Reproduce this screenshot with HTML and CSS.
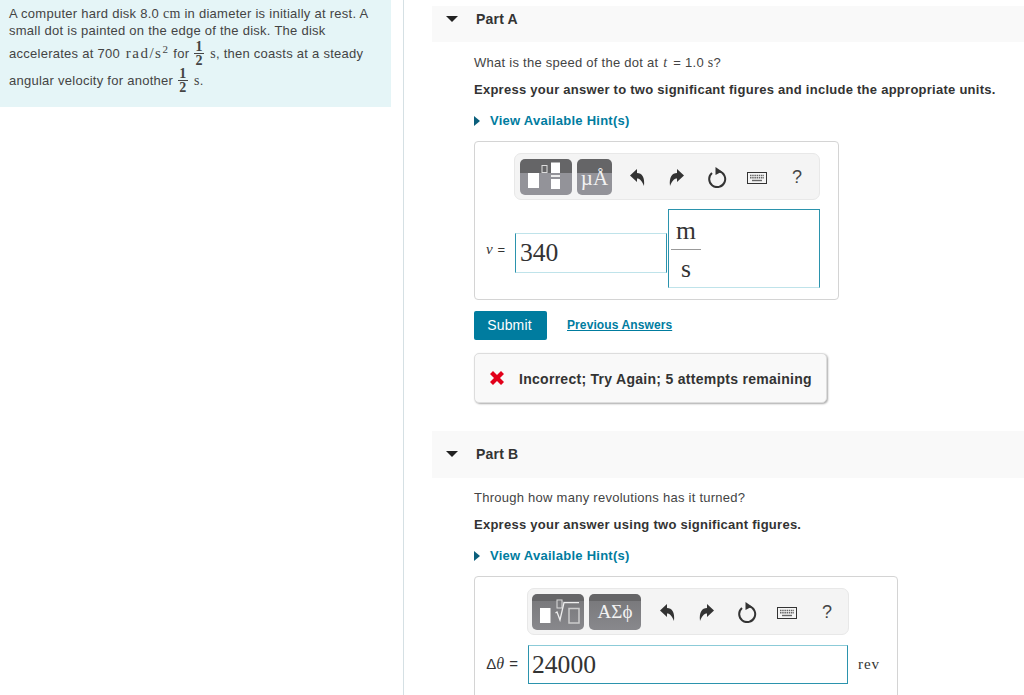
FILE: index.html
```html
<!DOCTYPE html>
<html lang="en">
<head>
    <meta charset="UTF-8">
    <title>Part A</title>
    <link rel="stylesheet" href="styles.css">
</head>
<body>
    <div class="page">
        <aside class="problem-col">
            <div class="problem">
                <p class="line">A computer hard disk 8.0 <span class="math">cm</span> in diameter is initially at rest. A</p>
                <p class="line">small dot is painted on the edge of the disk. The disk</p>
                <p class="line line-frac">accelerates at 700 <span class="math math-wide">rad/s<sup>2</sup></span> for <span class="frac"><span>1</span><span class="den">2</span></span> <span class="math">s</span>, then coasts at a steady</p>
                <p class="line line-frac">angular velocity for another <span class="frac"><span>1</span><span class="den">2</span></span> <span class="math">s</span>.</p>
            </div>
        </aside>

        <main class="parts-col">
            <section class="part part-a">
                <h2 class="part-head"><span class="caret-down"></span>Part A</h2>
                <div class="part-body">
                    <p class="question">What is the speed of the dot at <i class="math math-t">t</i> = 1.0 <span class="math">s</span>?</p>
                    <p class="express">Express your answer to two significant figures and include the appropriate units.</p>
                    <a class="hint"><span class="caret-right"></span>View Available Hint(s)</a>

                    <div class="answer-box box-a">
                        <div class="toolbar toolbar-a">
                            <span class="tool-btn btn-templates">
                                <svg width="52" height="36" viewBox="0 0 52 36">
                                    <rect x="8" y="14" width="11" height="15" fill="#fff"/>
                                    <rect x="22" y="6.500" width="5" height="7" fill="none" stroke="#ddd"/>
                                    <rect x="31" y="3.500" width="9" height="10.500" fill="#fff"/>
                                    <rect x="31" y="16" width="9" height="2" fill="#eee"/>
                                    <rect x="31" y="20" width="9" height="10" fill="#fff"/>
                                </svg>
                            </span>
                            <span class="tool-btn btn-symbols btn-unit">µÅ</span>
                            <span class="tool-icon"><svg width="22" height="22" viewBox="0 0 22 22"><path d="M4 9.500 L11 3 V7 C16 7 19 11 18 20 C16 15 14 12.500 11 12.500 V16 Z" fill="#333"/></svg></span>
                            <span class="tool-icon"><svg width="22" height="22" viewBox="0 0 22 22"><path d="M18 9.500 L11 3 V7 C6 7 3 11 4 20 C6 15 8 12.500 11 12.500 V16 Z" fill="#333"/></svg></span>
                            <span class="tool-icon"><svg width="22" height="22" viewBox="0 0 22 22"><path d="M6 7 A8 8 0 1 0 13 5.300" fill="none" stroke="#333" stroke-width="2"/><path d="M9.500 1 L16 5.500 L9.500 9 Z" fill="#333"/></svg></span>
                            <span class="tool-icon tool-keys"><svg width="20" height="12" viewBox="0 0 20 12"><rect x="0.500" y="0.500" width="19" height="11" fill="#f4f4f4" stroke="#333"/><path d="M3 3.500 H17 M3 5.800 H17" stroke="#666" stroke-width="1.400" stroke-dasharray="1.500 .7"/><path d="M5 8.500 H15" stroke="#666" stroke-width="1.400"/></svg></span>
                            <span class="tool-icon tool-help">?</span>
                        </div>
                        <div class="answer-row">
                            <span class="var-label"><i>v</i> =</span>
                            <span class="input input-value">340</span>
                            <span class="input input-unit">
                                <span class="unit-frac"><span class="unit-num">m</span><span class="unit-den">s</span></span>
                            </span>
                        </div>
                    </div>

                    <div class="actions">
                        <button class="submit">Submit</button>
                        <a class="prev-link">Previous Answers</a>
                    </div>

                    <div class="feedback">
                        <svg width="14" height="14" viewBox="0 0 14 14"><path d="M0 3 L3 0 L7 4 L11 0 L14 3 L10 7 L14 11 L11 14 L7 10 L3 14 L0 11 L4 7 Z" fill="#e2001a"/></svg>
                        <span>Incorrect; Try Again; 5 attempts remaining</span>
                    </div>
                </div>
            </section>

            <section class="part part-b">
                <h2 class="part-head head-b"><span class="caret-down"></span>Part B</h2>
                <div class="part-body">
                    <p class="question">Through how many revolutions has it turned?</p>
                    <p class="express">Express your answer using two significant figures.</p>
                    <a class="hint"><span class="caret-right"></span>View Available Hint(s)</a>

                    <div class="answer-box box-b">
                        <div class="toolbar toolbar-b">
                            <span class="tool-btn btn-templates">
                                <svg width="52" height="36" viewBox="0 0 52 36">
                                    <rect x="8" y="14" width="10.500" height="15" fill="#fff"/>
                                    <rect x="25" y="6" width="5" height="8" fill="none" stroke="#ddd"/>
                                    <path d="M23.500 19 L25 18 L28 26 L32 8.700 H47" fill="none" stroke="#eee" stroke-width="1.300"/>
                                    <rect x="37" y="14.500" width="10" height="14.500" fill="none" stroke="#ccc" stroke-width="1.500"/>
                                </svg>
                            </span>
                            <span class="tool-btn btn-symbols btn-greek">ΑΣϕ</span>
                            <span class="tool-icon"><svg width="22" height="22" viewBox="0 0 22 22"><path d="M4 9.500 L11 3 V7 C16 7 19 11 18 20 C16 15 14 12.500 11 12.500 V16 Z" fill="#333"/></svg></span>
                            <span class="tool-icon"><svg width="22" height="22" viewBox="0 0 22 22"><path d="M18 9.500 L11 3 V7 C6 7 3 11 4 20 C6 15 8 12.500 11 12.500 V16 Z" fill="#333"/></svg></span>
                            <span class="tool-icon"><svg width="22" height="22" viewBox="0 0 22 22"><path d="M6 7 A8 8 0 1 0 13 5.300" fill="none" stroke="#333" stroke-width="2"/><path d="M9.500 1 L16 5.500 L9.500 9 Z" fill="#333"/></svg></span>
                            <span class="tool-icon tool-keys"><svg width="20" height="12" viewBox="0 0 20 12"><rect x="0.500" y="0.500" width="19" height="11" fill="#f4f4f4" stroke="#333"/><path d="M3 3.500 H17 M3 5.800 H17" stroke="#666" stroke-width="1.400" stroke-dasharray="1.500 .7"/><path d="M5 8.500 H15" stroke="#666" stroke-width="1.400"/></svg></span>
                            <span class="tool-icon tool-help">?</span>
                        </div>
                        <div class="answer-row row-b">
                            <span class="var-label label-b">Δ<i>θ</i> =</span>
                            <span class="input input-long">24000</span>
                            <span class="unit-text">rev</span>
                        </div>
                    </div>
                </div>
            </section>
        </main>
    </div>
</body>
</html>
```

FILE: styles.css
```css
html, body {
    margin: 0;
    padding: 0;
    height: 100%;
    background: #fff;
    overflow: hidden;
}
body {
    font-family: "Liberation Sans", Arial, sans-serif;
    font-size: 13px;
    letter-spacing: 0.26px;
    color: #333;
}
p {
    margin: 0;
}
.page {
    display: flex;
    height: 695px;
}
.math {
    font-family: "Liberation Serif", serif;
    font-size: 14px;
}
.math-wide {
    font-size: 15px;
    letter-spacing: 1.5px;
    margin-left: 2px;
}
.math-t {
    margin: 0 2px 0 1px;
}
sup {
    font-size: 11px;
    line-height: 0;
    vertical-align: 5px;
}

/* left column */
.problem-col {
    width: 404px;
    flex: none;
    box-sizing: border-box;
    border-right: 1px solid #d5e0e4;
}
.problem {
    width: 391px;
    height: 107px;
    box-sizing: border-box;
    padding: 5px 9px 0;
    background: #e5f5f7;
    color: #444;
}
.line {
    line-height: 17px;
}
.line-frac {
    display: flex;
    align-items: center;
    height: 27px;
    padding-top: 1px;
    box-sizing: content-box;
    margin-bottom: -1px;
    white-space: pre;
}
.frac {
    display: inline-flex;
    flex-direction: column;
    align-items: center;
    width: 10px;
    margin: 0 6px 0 1px;
    font-family: "Liberation Serif", serif;
    font-size: 14px;
    font-weight: bold;
    line-height: 13px;
}
.den {
    border-top: 1px solid #444;
    width: 100%;
    text-align: center;
}

/* right column */
.parts-col {
    flex: 1;
    padding: 6px 0 0 28px;
    min-width: 0;
}
.part-head {
    display: flex;
    align-items: center;
    height: 36px;
    margin: 0;
    padding: 0 0 10px 14px;
    box-sizing: border-box;
    background: #f9f9f9;
    font-size: 14px;
    font-weight: bold;
    letter-spacing: 0.2px;
    color: #333;
}
.head-b {
    height: 47px;
    padding-bottom: 2px;
    margin-bottom: 11px;
}
.caret-down {
    width: 0;
    height: 0;
    margin-right: 18px;
    border-left: 6px solid transparent;
    border-right: 6px solid transparent;
    border-top: 6px solid #222;
}
.part-body {
    padding-left: 42px;
}
.question {
    margin-top: 12px;
    line-height: 17px;
    color: #444;
}
.part-b .question {
    margin-top: 0;
}
.express {
    margin-top: 10px;
    line-height: 17px;
    font-weight: bold;
    color: #333;
}
.hint {
    display: flex;
    align-items: center;
    margin-top: 14px;
    height: 17px;
    font-weight: bold;
    color: #007c9f;
}
.caret-right {
    width: 0;
    height: 0;
    margin-right: 10px;
    border-top: 5px solid transparent;
    border-bottom: 5px solid transparent;
    border-left: 6px solid #0b5f7c;
}

/* answer box and toolbar */
.answer-box {
    margin-top: 12px;
    border: 1px solid #d4d4d4;
    border-radius: 4px;
    box-sizing: border-box;
}
.box-a {
    width: 365px;
    height: 159px;
    padding-top: 11px;
}
.box-b {
    width: 424px;
    height: 130px;
    padding-top: 11px;
}
.toolbar {
    display: flex;
    align-items: center;
    height: 47px;
    box-sizing: border-box;
    background: #f4f4f4;
    border: 1px solid #e8e8e8;
    border-radius: 7px;
    padding-left: 5px;
}
.toolbar-a {
    width: 306px;
    margin-left: 39px;
}
.toolbar-b {
    width: 322px;
    margin-left: 52px;
    padding-left: 4px;
}
.tool-btn {
    display: block;
    height: 36px;
    box-sizing: border-box;
    border-radius: 5px;
    background: linear-gradient(#656567 0 40%, #939399 40% 100%);
    color: #f2f2f2;
    font-family: "Liberation Serif", serif;
    letter-spacing: 0;
    text-align: center;
}
.btn-templates {
    width: 52px;
    margin-right: 5px;
}
.btn-symbols {
    margin-right: 5px;
}
.btn-unit {
    width: 35px;
    font-size: 21px;
    line-height: 39px;
}
.btn-greek {
    width: 52px;
    margin-right: 6px;
    font-size: 19px;
    line-height: 36px;
    background: linear-gradient(#656567 0 20%, #7a7a7d 20%, #88888c 100%);
}
.toolbar-b .btn-templates {
    background: linear-gradient(#656567 0 20%, #7a7a7d 20%, #88888c 100%);
}
.tool-icon {
    display: flex;
    align-items: center;
    justify-content: center;
    width: 40px;
    height: 36px;
}
.tool-keys {
    padding-top: 2px;
    box-sizing: border-box;
}
.tool-help {
    padding-top: 1px;
    box-sizing: border-box;
    font-size: 18px;
    letter-spacing: 0;
    color: #444;
}
.answer-row {
    display: flex;
    align-items: center;
    height: 79px;
    margin-top: 9px;
}
.var-label {
    width: 40px;
    box-sizing: border-box;
    padding-right: 10px;
    margin-top: 1px;
    text-align: right;
    font-size: 13px;
    letter-spacing: 0;
    white-space: nowrap;
}
.var-label i {
    font-family: "Liberation Serif", serif;
    font-size: 15px;
    margin-right: 1px;
}
.input {
    display: block;
    box-sizing: border-box;
    font-family: "Liberation Serif", serif;
    font-size: 25.600px;
    letter-spacing: 0;
    color: #333;
    background: #fff;
    border: 1px solid #bfe3ea;
    border-left-color: #2b93ad;
    border-right-color: #2b93ad;
}
.input-value {
    width: 152px;
    height: 40px;
    line-height: 37px;
    padding-left: 4px;
    margin-top: 9px;
    margin-right: 1px;
}
.input-unit {
    width: 152px;
    height: 79px;
    padding-left: 2px;
    border-top-color: #2b93ad;
}
.unit-frac {
    display: inline-flex;
    flex-direction: column;
    width: 30px;
    text-align: center;
}
.unit-num {
    height: 39px;
    line-height: 41px;
    border-bottom: 1px solid #999;
}
.unit-den {
    line-height: 38px;
}
.row-b {
    height: 40px;
    margin-top: 9px;
}
.label-b {
    width: 53px;
    font-size: 15px;
    margin-top: 0;
}
.label-b i {
    font-size: 16px;
}
.input-long {
    width: 320px;
    height: 39px;
    line-height: 37px;
    padding-left: 3px;
    border-color: #2b93ad;
    border-top-color: #8ccbd8;
}
.unit-text {
    margin-left: 10px;
    font-family: "Liberation Serif", serif;
    font-size: 15px;
    letter-spacing: 0.9px;
}

/* submit + feedback */
.actions {
    display: flex;
    align-items: center;
    margin-top: 11px;
}
.submit {
    width: 73px;
    height: 29px;
    padding: 0 2px 2px 0;
    border: none;
    border-radius: 2px;
    background: #007c9f;
    color: #fff;
    font-family: "Liberation Sans", Arial, sans-serif;
    font-size: 14px;
    letter-spacing: 0.15px;
}
.prev-link {
    margin: -2px 0 0 20px;
    font-size: 12px;
    font-weight: bold;
    letter-spacing: 0.1px;
    color: #007c9f;
    text-decoration: underline;
}
.feedback {
    display: flex;
    align-items: center;
    gap: 15px;
    width: 353px;
    height: 50px;
    box-sizing: border-box;
    margin-top: 13px;
    padding-left: 15px;
    border: 1px solid #ddd;
    border-radius: 5px;
    background: #f9f9f9;
    box-shadow: 1px 1px 2px #aaa;
    font-size: 14px;
    font-weight: bold;
    letter-spacing: 0.28px;
    color: #333;
}
.feedback span {
    margin-top: 1px;
}
.part-b {
    margin-top: 28px;
}
```
